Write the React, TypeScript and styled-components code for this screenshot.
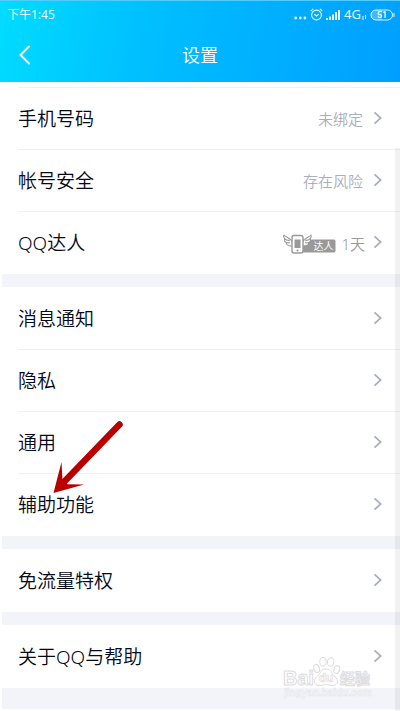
import React from "react";
import styled, { createGlobalStyle } from "styled-components";

const Global = createGlobalStyle`
  * { box-sizing: border-box; }
  body { margin: 0; background: #fff; font-family: "Noto Sans", "Noto Sans CJK SC", sans-serif; font-weight: 350; color: #03081a; }
  ul, h1, p { margin: 0; padding: 0; list-style: none; font-weight: inherit; }
  button { font: inherit; color: inherit; border: 0; background: none; padding: 0; cursor: pointer; }
`;

const Screen = styled.main`
  position: relative;
  padding-bottom: 2px;
`;

const Header = styled.header`
  height: 82px;
  color: #fff;
  background: linear-gradient(100deg, #00dcff 0%, #00c0ff 35%, #00a6ff 85%, #009fff 100%);
  border-top: 1px solid #4fcdff;
`;

const StatusBar = styled.div`
  display: flex;
  align-items: center;
  justify-content: space-between;
  height: 27px;
  padding: 0 5px 0 7px;
  font-size: 12px;
  font-weight: 400;
  line-height: 27px;
  color: #e4f8ff;
`;

const Indicators = styled.div`
  display: flex;
  align-items: center;
  gap: 3px;
`;

const Network = styled.span`
  display: flex;
  align-items: center;
  font-size: 13px;
`;

const NavBar = styled.nav`
  display: grid;
  grid-template-columns: 48px 1fr 48px;
  align-items: center;
  height: 54px;
`;

const BackButton = styled.button`
  display: flex;
  height: 54px;
  padding-left: 18px;
  align-items: center;
`;

const Title = styled.h1`
  font-size: 18px;
  line-height: 26px;
  text-align: center;
`;

const Settings = styled.div`
  margin-left: 2px;
  padding: 5px 0 21px;
  display: grid;
  gap: 13px;
  background: linear-gradient(#fff, #fff) top / 100% 60px no-repeat #f3f4f9;
`;

const Group = styled.ul`
  background: #fff;
  padding-bottom: 1px;
`;

const Item = styled.li<{ $line?: boolean }>`
  margin-left: 16px;
  height: 62px;
  border-top: 1px solid ${(p) => (p.$line ? "#f0f0f5" : "transparent")};
`;

const RowButton = styled.button`
  width: 100%;
  height: 60px;
  padding-right: 17px;
  display: flex;
  align-items: center;
  text-align: left;
`;

const Label = styled.span`
  flex: 1;
  font-size: 19px;
  line-height: 28px;
  padding-top: 1px;
`;

const Value = styled.span<{ $muted?: boolean }>`
  display: flex;
  align-items: center;
  gap: 5px;
  margin-right: ${(p) => (p.$muted ? 8 : 10)}px;
  padding-top: ${(p) => (p.$muted ? 4 : 1)}px;
  font-size: 15px;
  line-height: 22px;
  color: ${(p) => (p.$muted ? "#999" : "#a9adbd")};
`;

const ScrollTrack = styled.div`
  position: absolute;
  top: 148px;
  right: 0;
  bottom: 0;
  width: 5px;
  background: rgba(0, 0, 0, 0.05);
`;

const Pointer = styled.svg`
  position: absolute;
  left: 50px;
  top: 418px;
  pointer-events: none;
`;

const Watermark = styled.svg`
  position: absolute;
  right: 24px;
  bottom: 11px;
  pointer-events: none;
`;

function Chevron() {
  return (
    <svg width="10" height="14" viewBox="0 0 10 14" fill="none" stroke="#a9adc0" strokeWidth="1.7" aria-hidden="true">
      <path d="M1.5 1.3 7.7 7 1.5 12.7" />
    </svg>
  );
}

function MasterBadge() {
  return (
    <svg width="53" height="22" viewBox="0 0 53 22" role="img" aria-label="达人">
      <rect x="18" y="6.500" width="34.500" height="13" rx="1.500" fill="#999" />
      <g fill="#fff" stroke="#999" strokeWidth="1.1" strokeLinejoin="round">
        <path d="M9 13C4 13 3 11 3.500 9.500 1.500 9 1 7 2 6 .5 4.500.5 3 1 2c2 2.500 7 2.500 8 7" />
        <path d="M3.500 9.500C5 10 6 10 7 9.500M2 6c2 1.500 4 1.500 5 1" fill="none" />
        <path d="M20 13c5 0 6-2 5.500-3.500C27.500 9 28 7 27 6c1.500-1.500 1.500-3 1-4-2 2.500-7 2.500-8 7" />
        <path d="M25.500 9.500C24 10 23 10 22 9.500M27 6c-2 1.500-4 1.500-5 1" fill="none" />
        <rect x="9" y="2.500" width="11" height="17.500" rx="2" strokeWidth="1.400" />
      </g>
      <rect x="11.500" y="6.500" width="6" height="8.500" fill="#999" />
      <circle cx="14.500" cy="17.500" r="1.100" fill="#999" />
      <text x="30.500" y="16.500" fontSize="10" fontWeight="400" fill="#fff">达人</text>
    </svg>
  );
}

type Row = { label: string; value?: string; badge?: boolean };

const groups: Row[][] = [
  [
    { label: "手机号码", value: "未绑定" },
    { label: "帐号安全", value: "存在风险" },
    { label: "QQ达人", value: "1天", badge: true },
  ],
  [{ label: "消息通知" }, { label: "隐私" }, { label: "通用" }, { label: "辅助功能" }],
  [{ label: "免流量特权" }],
  [{ label: "关于QQ与帮助" }],
];

export default function App() {
  return (
    <Screen>
      <Global />
      <Header>
        <StatusBar>
          <span>下午1:45</span>
          <Indicators>
            <svg width="13" height="14" viewBox="0 0 13 14" fill="#e4f8ff" aria-hidden="true">
              <circle cx="1.700" cy="10" r="1.400" />
              <circle cx="6.300" cy="10" r="1.400" />
              <circle cx="10.900" cy="10" r="1.400" />
            </svg>
            <svg width="13" height="13" viewBox="0 0 13 13" fill="none" stroke="#e4f8ff" strokeWidth="1.100" aria-hidden="true">
              <circle cx="6.500" cy="7" r="4.900" />
              <path d="M4.300 6.300 6.500 8l2.300-1.800M.7 3.200 3.200.9M12.300 3.200 9.800.9" />
            </svg>
            <svg width="15" height="12" viewBox="0 0 15 12" fill="#e4f8ff" aria-hidden="true">
              <path d="M0 9h2v2H0zM3 7.500h2V11H3zM6 5.500h2V11H6zM9 3h2v8H9zM12 1h2v10h-2z" />
            </svg>
            <Network>
              4G
              <svg width="6" height="13" viewBox="0 0 6 13" stroke="#e4f8ff" strokeWidth="1" aria-hidden="true">
                <path d="M2 8v4M4.500 7v4" />
              </svg>
            </Network>
            <svg width="25" height="12" viewBox="0 0 25 12" role="img" aria-label="51%">
              <path d="M6 1h6v10H6A5 5 0 0 1 6 1z" fill="#3fb9ff" />
              <rect x="1" y="1" width="21.500" height="10" rx="5" fill="none" stroke="#e4f8ff" />
              <path d="M24 4v4" stroke="#e4f8ff" />
              <text x="12" y="9.300" textAnchor="middle" fontFamily="Roboto" fontWeight="500" fontSize="9" fill="#fff">51</text>
            </svg>
          </Indicators>
        </StatusBar>
        <NavBar>
          <BackButton aria-label="返回">
            <svg width="14" height="20" viewBox="0 0 14 20" fill="none" stroke="#fff" strokeWidth="2" strokeLinecap="round" strokeLinejoin="round">
              <path d="M11 1.500 2.500 10 11 18.500" />
            </svg>
          </BackButton>
          <Title>设置</Title>
        </NavBar>
      </Header>
      <Settings>
        {groups.map((rows, g) => (
          <Group key={g}>
            {rows.map((row, i) => (
              <Item key={row.label} $line={g === 0 || i > 0}>
                <RowButton>
                  <Label>{row.label}</Label>
                  {row.value && (
                    <Value $muted={row.badge}>
                      {row.badge && <MasterBadge />}
                      {row.value}
                    </Value>
                  )}
                  <Chevron />
                </RowButton>
              </Item>
            ))}
          </Group>
        ))}
      </Settings>
      <ScrollTrack />
      <Pointer width="76" height="80" viewBox="0 0 76 80" aria-hidden="true">
        <path d="M69.500 6.500 13 65" stroke="#b90000" strokeWidth="6.500" strokeLinecap="round" />
        <path d="M3.500 75 11.500 44l1 18 5 4.300L34 66.500z" fill="#b90000" />
      </Pointer>
      <Watermark
        width="96"
        height="46"
        viewBox="0 0 96 46"
        fill="#fff"
        stroke="#dcdce0"
        strokeWidth="1"
        fontFamily="'Liberation Sans', 'Noto Sans CJK SC', sans-serif"
        fontWeight="700"
      >
        <text x="3" y="31" fontSize="20">Bai</text>
        <ellipse cx="36.700" cy="14.500" rx="2.800" ry="4" transform="rotate(-20 36.700 14.500)" />
        <ellipse cx="43" cy="7.700" rx="3.200" ry="4.300" />
        <ellipse cx="50.700" cy="8" rx="3.200" ry="4.300" transform="rotate(10 50.700 8)" />
        <ellipse cx="56.800" cy="15.500" rx="2.800" ry="4" transform="rotate(20 56.800 15.500)" />
        <path d="M46 15c5 0 5 4 9 7.500s3 9-2 9c-3 0-5-1-7-1s-4 1-7 1c-5 0-6-5.500-2-9S41 15 46 15z" />
        <text x="46" y="28" textAnchor="middle" fontSize="12" strokeWidth="0.700">du</text>
        <text x="60" y="30" fontSize="15">经验</text>
        <text x="4" y="42" fontSize="10" strokeWidth="0.500" stroke="#e3e3e8" fill="#fafafc">jingyan.baidu.com</text>
      </Watermark>
    </Screen>
  );
}
